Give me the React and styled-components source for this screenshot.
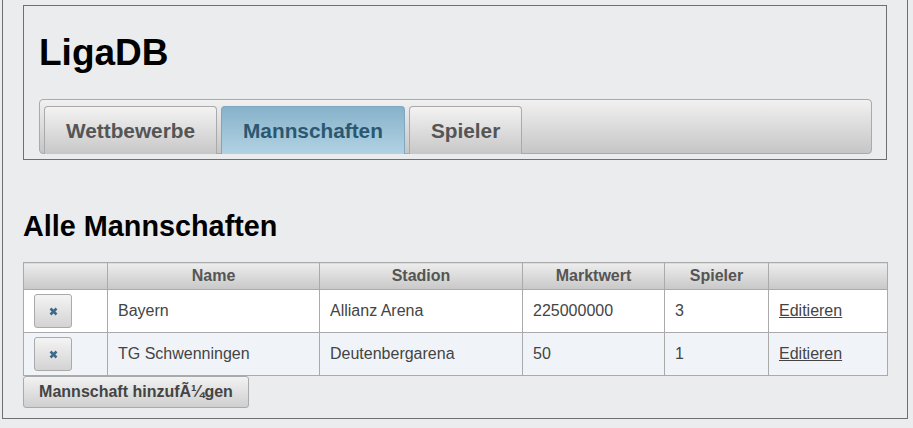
import React from "react";
import styled, { createGlobalStyle } from "styled-components";

const GlobalStyle = createGlobalStyle`
  html, body {
    margin: 0;
    padding: 0;
    background: #ebecee;
    font-family: "Liberation Sans", Arial, sans-serif;
  }
`;

const Page = styled.div`
  box-sizing: border-box;
  width: 906px;
  margin-left: 2px;
  padding: 5px 20px 10px 20px;
  border: 1px solid #6f6f6f;
  border-top: none;
  background: #ebecee;
`;

const Header = styled.div`
  border: 1px solid #6f6f6f;
  padding: 0 14px 5px 15px;
  width: 864px;
  box-sizing: border-box;
`;

const Title = styled.h1`
  margin: 27px 0 26px 0;
  font-size: 37px;
  line-height: 40px;
  font-weight: bold;
  color: #000;
`;

const TabBar = styled.div`
  display: flex;
  gap: 4px;
  padding: 5px 4px 0 4px;
  border: 1px solid #aaa;
  border-radius: 4px;
  background: linear-gradient(#f1f1f1, #c6c6c6);
  height: 55px;
  box-sizing: border-box;
  align-items: flex-end;
`;

const Tab = styled.div`
  box-sizing: border-box;
  height: 48px;
  margin-bottom: -1px;
  padding: 12px 21px 0 21px;
  font-size: 20.8px;
  line-height: 24px;
  font-weight: bold;
  border: 1px solid ${(p) => (p.active ? "#7fa6bd" : "#aaa")};
  border-bottom: none;
  border-radius: 4px 4px 0 0;
  color: ${(p) => (p.active ? "#2b5870" : "#555")};
  background: ${(p) =>
    p.active
      ? "linear-gradient(#86b2ca, #b2d2e3)"
      : "linear-gradient(#f3f3f3, #c7c7c7)"};
`;

const Heading = styled.h2`
  margin: 50px 0 19px 0;
  font-size: 28.8px;
  line-height: 33px;
  font-weight: bold;
  color: #000;
`;

const Table = styled.table`
  border-collapse: collapse;
  table-layout: fixed;
  width: 864px;
  font-size: 16px;
  color: #444;
`;

const Th = styled.th`
  border: 1px solid #aaa;
  padding: 4px 10px;
  line-height: 18px;
  font-weight: bold;
  color: #555;
  background: linear-gradient(#ededed, #c8c8c8);
`;

const Tr = styled.tr`
  background: ${(p) => (p.alt ? "#f0f4f9" : "#fff")};
`;

const Td = styled.td`
  border: 1px solid #aaa;
  padding: 4px 10px;
  line-height: 18px;
  height: 34px;
  box-sizing: content-box;
`;

const DeleteButton = styled.button`
  display: flex;
  align-items: center;
  justify-content: center;
  width: 38px;
  height: 34px;
  padding: 0;
  border: 1px solid #aaa;
  border-radius: 3px;
  background: linear-gradient(#f4f4f4, #d3d3d3);
`;

const EditLink = styled.a`
  color: #444;
  text-decoration: underline;
`;

const AddButton = styled.button`
  display: block;
  box-sizing: border-box;
  margin-top: 0;
  width: 226px;
  height: 32px;
  padding: 0 15px;
  font-family: "Liberation Sans", Arial, sans-serif;
  font-size: 16px;
  font-weight: bold;
  color: #444;
  border: 1px solid #aaa;
  border-radius: 3px;
  background: linear-gradient(#f2f2f2, #cfcfcf);
`;

const CloseIcon = () => (
  <svg width="9" height="9" viewBox="0 0 9 9">
    <path d="M1.5 1.5 L7.5 7.5 M7.5 1.5 L1.5 7.5" stroke="#3d6a87" strokeWidth="2.6" strokeLinecap="butt" />
  </svg>
);

const teams = [
  { name: "Bayern", stadion: "Allianz Arena", wert: "225000000", spieler: "3" },
  { name: "TG Schwenningen", stadion: "Deutenbergarena", wert: "50", spieler: "1" },
];

export default function App() {
  return (
    <>
      <GlobalStyle />
      <Page>
        <Header>
          <Title>LigaDB</Title>
          <TabBar>
            <Tab>Wettbewerbe</Tab>
            <Tab active>Mannschaften</Tab>
            <Tab>Spieler</Tab>
          </TabBar>
        </Header>
        <Heading>Alle Mannschaften</Heading>
        <Table>
          <colgroup>
            <col style={{ width: 84 }} />
            <col style={{ width: 212 }} />
            <col style={{ width: 203 }} />
            <col style={{ width: 142 }} />
            <col style={{ width: 104 }} />
            <col style={{ width: 119 }} />
          </colgroup>
          <thead>
            <tr>
              <Th></Th>
              <Th>Name</Th>
              <Th>Stadion</Th>
              <Th>Marktwert</Th>
              <Th>Spieler</Th>
              <Th></Th>
            </tr>
          </thead>
          <tbody>
            {teams.map((t, i) => (
              <Tr key={t.name} alt={i % 2 === 1}>
                <Td>
                  <DeleteButton>
                    <CloseIcon />
                  </DeleteButton>
                </Td>
                <Td>{t.name}</Td>
                <Td>{t.stadion}</Td>
                <Td>{t.wert}</Td>
                <Td>{t.spieler}</Td>
                <Td>
                  <EditLink href="#">Editieren</EditLink>
                </Td>
              </Tr>
            ))}
          </tbody>
        </Table>
        <AddButton>Mannschaft hinzufÃ¼gen</AddButton>
      </Page>
    </>
  );
}
